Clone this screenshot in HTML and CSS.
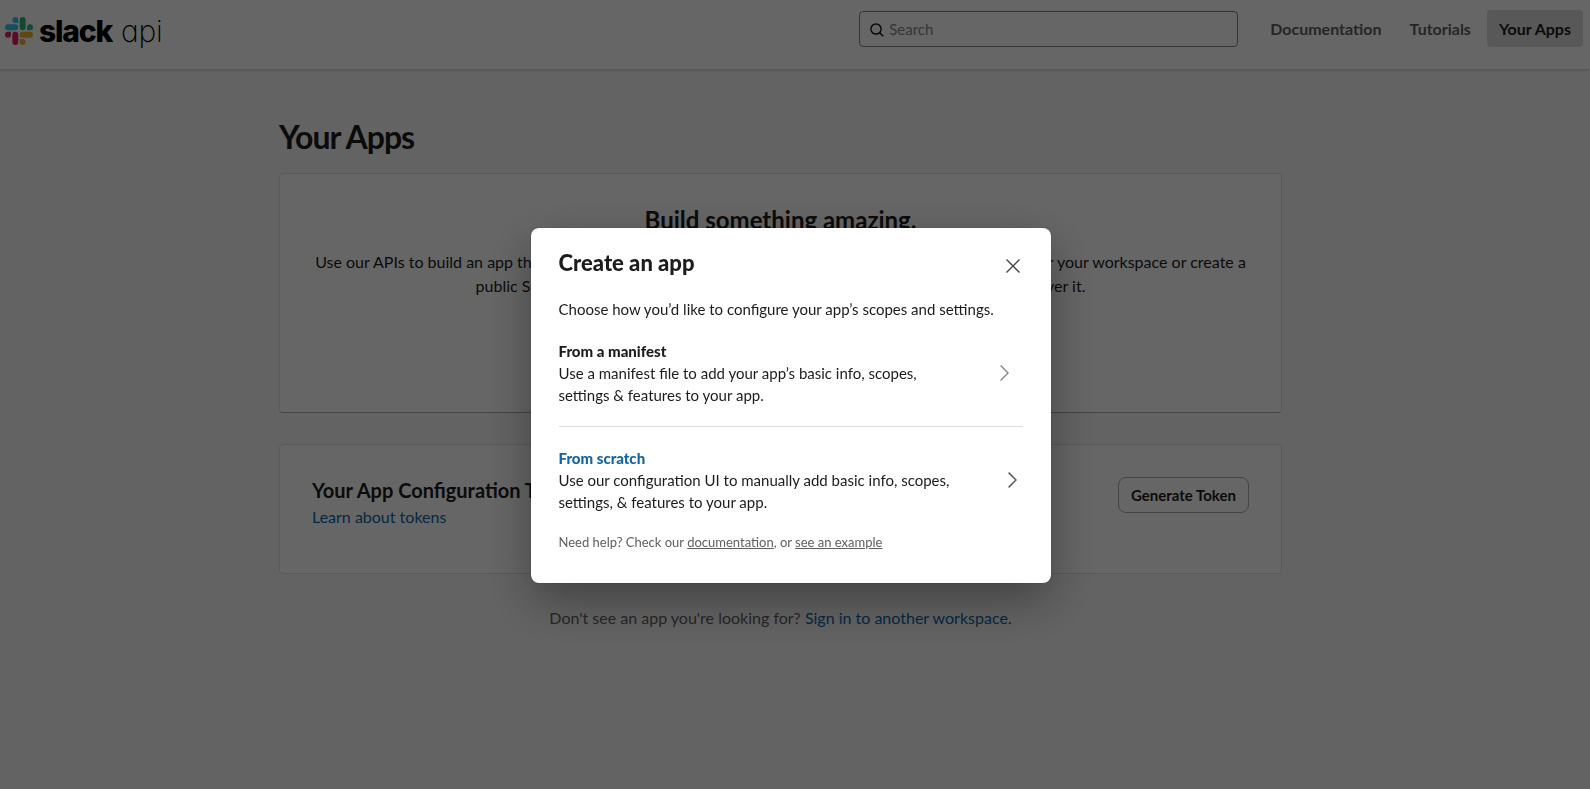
FILE: index.html
```html
<!DOCTYPE html>
<html lang="en">
<head>
  <meta charset="UTF-8" />
  <meta name="viewport" content="width=device-width, initial-scale=1.0" />
  <title>Slack API: Applications | Slack</title>
  <link rel="stylesheet" href="styles.css">
</head>
<body>
  <header class="header">
    <a class="logo" href="#">
      <svg class="logo-mark" viewBox="0 0 122.8 122.8">
        <path d="M25.8 77.6a12.9 12.9 0 1 1-12.9-12.9h12.9v12.9zM32.3 77.6a12.9 12.9 0 0 1 25.8 0v32.3a12.9 12.9 0 0 1-25.8 0V77.6z" fill="#e01e5a"/>
        <path d="M45.2 25.8a12.9 12.9 0 1 1 12.9-12.9v12.9H45.2zM45.2 32.3a12.9 12.9 0 0 1 0 25.8H12.9a12.9 12.9 0 0 1 0-25.8h32.3z" fill="#36c5f0"/>
        <path d="M97 45.2a12.9 12.9 0 1 1 12.9 12.9H97V45.2zM90.5 45.2a12.9 12.9 0 0 1-25.8 0V12.9a12.9 12.9 0 0 1 25.8 0v32.3z" fill="#2eb67d"/>
        <path d="M77.6 97a12.9 12.9 0 1 1-12.9 12.9V97h12.9zM77.6 90.5a12.9 12.9 0 0 1 0-25.8h32.3a12.9 12.9 0 0 1 0 25.8H77.6z" fill="#ecb22e"/>
      </svg>
      <span class="logo-slack">slack</span>
      <span class="logo-api">api</span>
    </a>
    <div class="search">
      <svg class="search-icon" viewBox="0 0 14 14" fill="none" stroke="#1d1c1d" stroke-width="1.5">
        <circle cx="6" cy="6" r="5.1"/>
        <path d="M9.6 9.6l3.6 3.6"/>
      </svg>
      <span>Search</span>
    </div>
    <nav class="nav">
      <a href="#">Documentation</a>
      <a href="#">Tutorials</a>
      <a class="active" href="#">Your Apps</a>
    </nav>
  </header>

  <main class="container">
    <h1>Your Apps</h1>

    <section class="card card-build">
      <h2>Build something amazing.</h2>
      <p>Use our APIs to build an app that makes people's working lives better. You can create an app that's just for your workspace or create a public Slack App to list in the Slack Marketplace, where anyone on Slack can discover it.</p>
    </section>

    <section class="card card-tokens">
      <div>
        <h3>Your App Configuration Tokens</h3>
        <a href="#">Learn about tokens</a>
      </div>
      <button class="btn">Generate Token</button>
    </section>

    <p class="signin">Don't see an app you're looking for? <a href="#">Sign in to another workspace.</a></p>
  </main>

  <!-- Create app modal -->
  <div class="overlay">
    <div class="modal">
      <div class="modal-header">
        <h2>Create an app</h2>
        <svg class="close" viewBox="0 0 14 14" fill="none" stroke="#454447" stroke-width="1.4">
          <path d="M.5.5l13 13M13.5.5l-13 13"/>
        </svg>
      </div>
      <p class="intro">Choose how you’d like to configure your app’s scopes and settings.</p>

      <div class="option">
        <div>
          <h4>From a manifest</h4>
          <p>Use a manifest file to add your app’s basic info, scopes, settings &amp; features to your app.</p>
        </div>
        <svg class="chevron" viewBox="0 0 9 16" fill="none" stroke="#868686" stroke-width="1.4">
          <path d="M.6.6L8 8 .6 15.4"/>
        </svg>
      </div>
      <div class="option option-active">
        <div>
          <h4>From scratch</h4>
          <p>Use our configuration UI to manually add basic info, scopes, settings, &amp; features to your app.</p>
        </div>
        <svg class="chevron" viewBox="0 0 9 16" fill="none" stroke="#5b5a5c" stroke-width="1.5">
          <path d="M.6.6L8 8 .6 15.4"/>
        </svg>
      </div>

      <p class="help">Need help? Check our <a href="#">documentation</a>, or <a href="#">see an example</a></p>
    </div>
  </div>
</body>
</html>
```
FILE: styles.css
```css
* {
  box-sizing: border-box;
}
body {
  margin: 0;
  height: 789px;
  overflow: hidden;
  background: #f8f8f8;
  color: #1d1c1d;
  font-family: Lato, "Liberation Sans", sans-serif;
  font-size: 16px;
  line-height: 24px;
}
h1, h2, h3, h4, p {
  margin: 0;
}
a {
  color: #1264a3;
  text-decoration: none;
}

/* Header */
.header {
  display: flex;
  align-items: flex-start;
  height: 69px;
  padding: 10px 7px 0 5px;
  background: #fff;
  box-shadow: 0 1px 3px rgba(0,0,0,0.18);
}
.logo {
  display: flex;
  align-items: center;
  height: 42px;
  color: #000;
  font-family: Inter, sans-serif;
}
.logo-mark {
  width: 28px;
  height: 28px;
  margin-right: 6px;
}
.logo-slack {
  width: 82px;
  font-size: 30px;
  font-weight: 800;
  letter-spacing: -1.2px;
}
.logo-api {
  font-size: 30px;
  font-weight: 200;
  letter-spacing: -0.2px;
  font-feature-settings: "cv11";
}
.search {
  display: flex;
  align-items: center;
  width: 379px;
  height: 36px;
  margin: 1px 20px 0 auto;
  padding-left: 10px;
  border: 1px solid #868686;
  border-radius: 4px;
  color: #868686;
  font-size: 15px;
}
.search-icon {
  width: 14px;
  height: 14px;
  margin: 1px 5px 0 0;
}
.nav {
  display: flex;
  gap: 4px;
  font-weight: 700;
}
.nav a {
  height: 37px;
  padding: 0 12px;
  border-radius: 4px;
  color: #616061;
  line-height: 38px;
}
.nav .active {
  background: #ddd;
  color: #1d1c1d;
}

/* Page */
.container {
  width: 1003px;
  margin: 0 0 0 279px;
  padding-top: 48px;
}
h1 {
  margin-bottom: 16px;
  font-size: 32px;
  line-height: 40px;
  letter-spacing: -1px;
}
.card {
  border: 1px solid #e0e0e0;
  border-radius: 4px;
  background: #fff;
}
.card-build {
  height: 240px;
  padding: 30px 32px;
  border-bottom-color: #aaa;
  text-align: center;
}
.card-build h2 {
  margin-bottom: 14px;
  font-size: 24px;
  line-height: 32px;
}
.card-tokens {
  display: flex;
  justify-content: space-between;
  align-items: flex-start;
  height: 130px;
  margin-top: 31px;
  padding: 32px;
}
.card-tokens h3 {
  margin-bottom: 2px;
  font-size: 20px;
  line-height: 26px;
}
.btn {
  width: 131px;
  height: 36px;
  padding: 0;
  border: 1px solid #aaa;
  border-radius: 8px;
  background: #fff;
  color: #1d1c1d;
  font: 700 15px Lato, sans-serif;
}
.signin {
  margin-top: 32px;
  color: #616061;
  text-align: center;
}

/* Modal */
.overlay {
  position: fixed;
  inset: 0;
  background: rgba(0,0,0,0.6);
}
.modal {
  width: 520px;
  height: 355px;
  margin: 228px 0 0 531px;
  padding: 20px 28px 20px 27.5px;
  border-radius: 8px;
  background: #fff;
  box-shadow: 0 18px 48px rgba(0,0,0,0.35), 0 0 1px rgba(0,0,0,0.5);
  font-size: 15px;
  line-height: 22px;
}
.modal-header {
  display: flex;
  justify-content: space-between;
}
.modal-header h2 {
  font-size: 22px;
  font-weight: 900;
  line-height: 30px;
}
.close {
  width: 14px;
  height: 14px;
  margin: 11px 3px 0 0;
}
.intro {
  margin-top: 20px;
}
.option {
  display: flex;
  justify-content: space-between;
  align-items: center;
  margin-top: 20px;
  padding-right: 14px;
}
.option div {
  width: 400px;
}
.option h4 {
  font-weight: 900;
}
.option-active {
  margin-top: 20px;
  padding: 20px 6px 0 0;
  border-top: 1px solid #ddd;
}
.option-active h4 {
  color: #1264a3;
}
.chevron {
  width: 9px;
  height: 16px;
}
.help {
  margin-top: 18px;
  color: #616061;
  font-size: 13px;
}
.help a {
  color: #616061;
  text-decoration: underline;
}
```
